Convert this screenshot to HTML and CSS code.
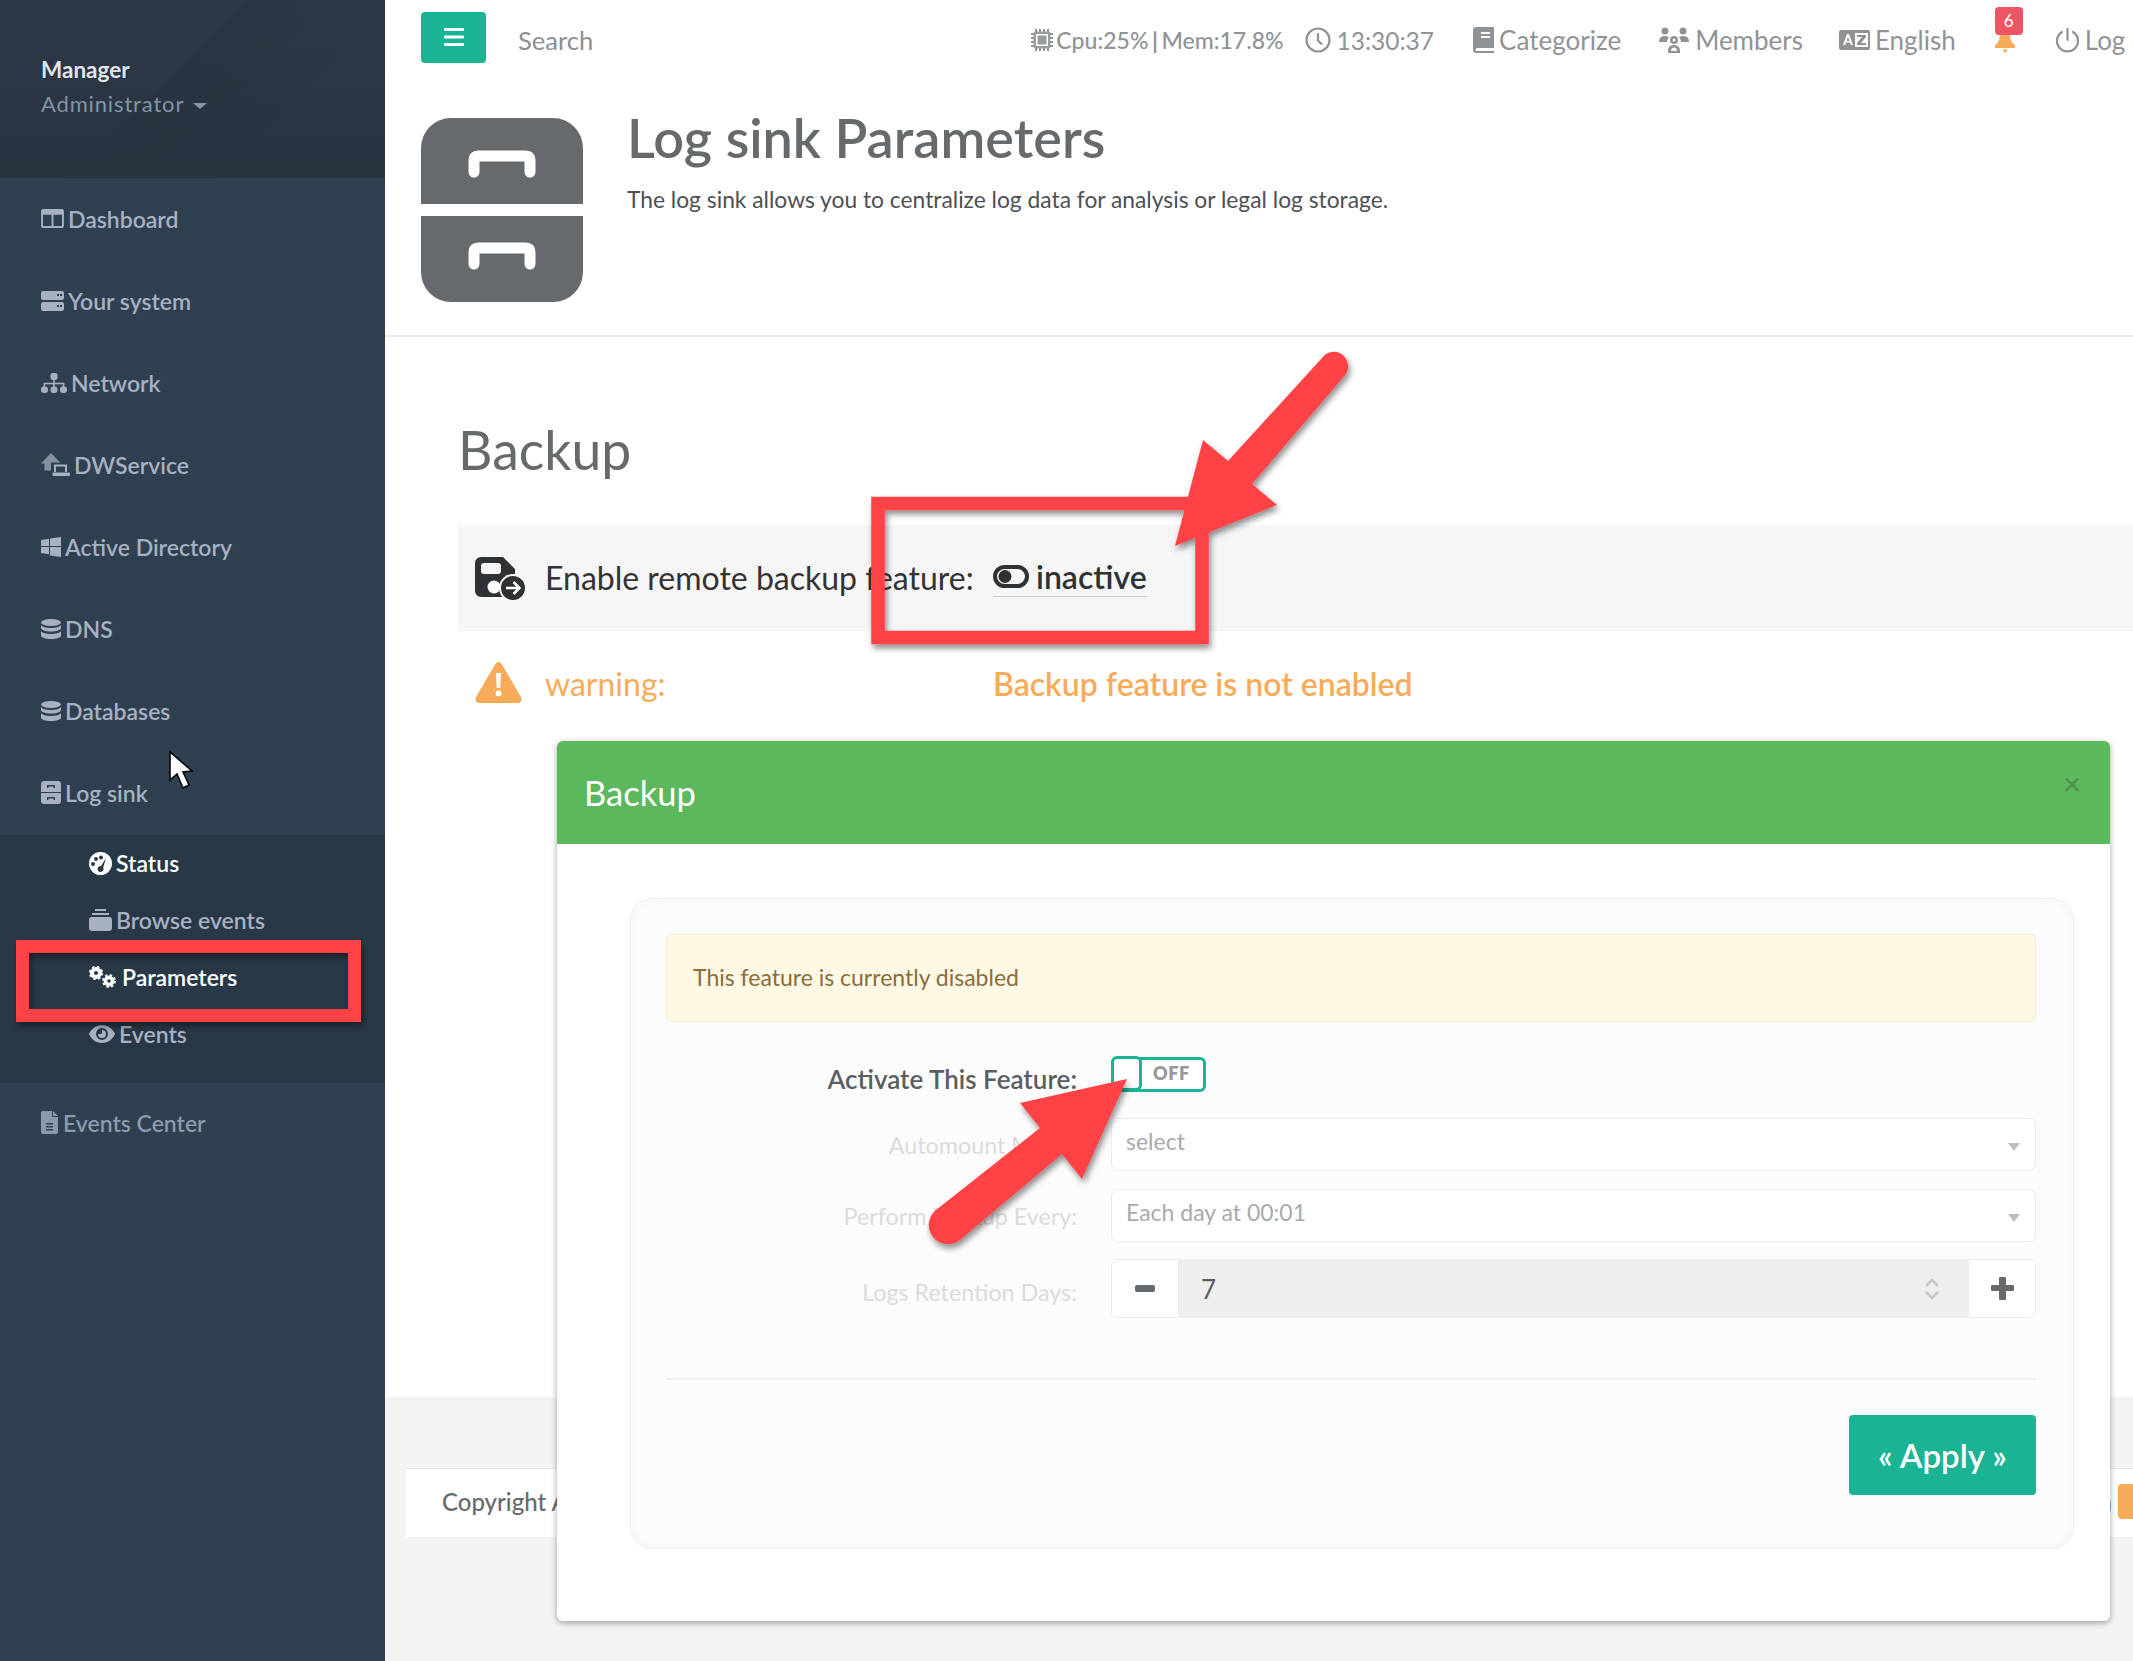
FILE: index.html
```html
<!DOCTYPE html>
<html lang="en">
<head>
<meta charset="utf-8">
<title>Log sink Parameters</title>
<link rel="stylesheet" href="styles.css">
</head>
<body>
<div class="app">
  <aside class="sidebar">
    <div class="profile">
      <div class="profile-name">Manager</div>
      <div class="profile-role">Administrator <span class="caret"></span></div>
    </div>
    <nav class="nav">
      <a class="nav-item"><svg class="ni" width="23" height="19" viewBox="0 0 24 20"><path fill="currentColor" fill-rule="evenodd" d="M2 0h20a2 2 0 0 1 2 2v16a2 2 0 0 1-2 2H2a2 2 0 0 1-2-2V2a2 2 0 0 1 2-2zm0 6v12h9V6zm11 0v12h9V6z"/></svg>Dashboard</a>
      <a class="nav-item"><svg class="ni" width="23" height="20" viewBox="0 0 23 20"><path fill="currentColor" fill-rule="evenodd" d="M2 0h19a2 2 0 0 1 2 2v5a2 2 0 0 1-2 2H2a2 2 0 0 1-2-2V2a2 2 0 0 1 2-2zm14 3v2h2V3zm3 0v2h2V3zM2 11h19a2 2 0 0 1 2 2v5a2 2 0 0 1-2 2H2a2 2 0 0 1-2-2v-5a2 2 0 0 1 2-2zm14 3v2h2v-2zm3 0v2h2v-2z"/></svg>Your system</a>
      <a class="nav-item"><svg class="ni" width="26" height="20" viewBox="0 0 26 20"><g fill="currentColor"><rect x="9.500" width="7" height="7" rx="2"/><rect x="12.200" y="6" width="1.600" height="9"/><rect x="3" y="9.700" width="20" height="1.600"/><rect x="2.600" y="10" width="1.600" height="5"/><rect x="21.800" y="10" width="1.600" height="5"/><rect y="13.500" width="7" height="6.500" rx="3"/><rect x="9.500" y="13.500" width="7" height="6.500" rx="3"/><rect x="19" y="13.500" width="7" height="6.500" rx="3"/></g></svg>Network</a>
      <a class="nav-item"><svg class="ni" width="29" height="23" viewBox="0 0 29 23"><path fill="currentColor" opacity=".72" d="M0 10.500 10 0l9 9.500v8H3.500v-7z"/><rect x="10" y="9.500" width="19" height="13.500" fill="#2f4050"/><path fill="none" stroke="currentColor" stroke-width="2" d="M14 19V12.500h11V19"/><rect x="11.500" y="19.500" width="17.500" height="3.500" rx="1" fill="currentColor"/></svg>DWService</a>
      <a class="nav-item"><svg class="ni" width="20" height="20" viewBox="0 0 20 20"><path fill="currentColor" d="M0 3l8-1.200V9H0zM9 1.600 20 0v9H9zM0 10h8v7.200L0 16zM9 10h11v10L9 18.400z"/></svg>Active Directory</a>
      <a class="nav-item"><svg class="ni" width="20" height="22" viewBox="0 0 20 20"><ellipse cx="10" cy="3.500" rx="10" ry="3.500" fill="currentColor"/><path fill="currentColor" d="M0 6c1 2 5 3 10 3s9-1 10-3v3c0 2-4.500 3.500-10 3.500S0 11 0 9zM0 12c1 2 5 3 10 3s9-1 10-3v4.500C20 18.500 15.500 20 10 20S0 18.500 0 16.500z"/></svg>DNS</a>
      <a class="nav-item"><svg class="ni" width="20" height="22" viewBox="0 0 20 20"><ellipse cx="10" cy="3.500" rx="10" ry="3.500" fill="currentColor"/><path fill="currentColor" d="M0 6c1 2 5 3 10 3s9-1 10-3v3c0 2-4.500 3.500-10 3.500S0 11 0 9zM0 12c1 2 5 3 10 3s9-1 10-3v4.500C20 18.500 15.500 20 10 20S0 18.500 0 16.500z"/></svg>Databases</a>
      <a class="nav-item"><svg class="ni" width="20" height="23" viewBox="0 0 20 23"><path fill="currentColor" fill-rule="evenodd" d="M3 0h14a3 3 0 0 1 3 3v8H0V3a3 3 0 0 1 3-3zm3 4v3h1.500V5.500h5V7H14V4zM0 12h20v8a3 3 0 0 1-3 3H3a3 3 0 0 1-3-3zm6 4v3h1.500v-1.500h5V19H14v-3z"/></svg>Log sink</a>
      <div class="subnav">
        <a class="sub-item is-on"><svg class="ni" width="23" height="23" viewBox="0 0 23 23"><path fill="currentColor" fill-rule="evenodd" d="M11.500 0a11.500 11.500 0 1 1 0 23 11.500 11.500 0 0 1 0-23zM4 10a2 2 0 1 0 0 4 2 2 0 0 0 0-4zm3-5a2 2 0 1 0 0 4 2 2 0 0 0 0-4zm5-1.500a2 2 0 1 0 0 4 2 2 0 0 0 0-4zM17 6l-5 8a3 3 0 1 0 2.200 1.500z"/></svg>Status</a>
        <a class="sub-item"><svg class="ni" width="23" height="22" viewBox="0 0 23 22"><path fill="currentColor" d="M6 0h11v2H6zM3 4h17v2H3zM3 8h17a3 3 0 0 1 3 3v8a3 3 0 0 1-3 3H3a3 3 0 0 1-3-3v-8a3 3 0 0 1 3-3z"/></svg>Browse events</a>
        <a class="sub-item is-on"><svg class="ni sub-gears" width="28" height="22" viewBox="0 0 28 22"><g fill="none" stroke="currentColor"><circle cx="7" cy="7" r="4" stroke-width="4"/><circle cx="7" cy="7" r="6.200" stroke-width="1.800" stroke-dasharray="2.500 2.400"/><circle cx="20" cy="15" r="3.600" stroke-width="3.600"/><circle cx="20" cy="15" r="6" stroke-width="1.800" stroke-dasharray="2.500 2.200"/></g></svg>Parameters</a>
        <a class="sub-item"><svg class="ni" width="26" height="18" viewBox="0 0 26 18"><path fill="currentColor" fill-rule="evenodd" d="M13 0c6 0 11 4 13 9-2 5-7 9-13 9S2 14 0 9c2-5 7-9 13-9zm0 3a6 6 0 1 0 0 12 6 6 0 0 0 0-12zm0 2a4 4 0 1 1-4 4h3a1 1 0 0 0 1-1z"/></svg>Events</a>
      </div>
      <a class="nav-item nav-dim"><svg class="ni nav-doc" width="17" height="23" viewBox="0 0 17 23"><path fill="currentColor" fill-rule="evenodd" d="M2 0h9v6h6v15a2 2 0 0 1-2 2H2a2 2 0 0 1-2-2V2a2 2 0 0 1 2-2zm10 0 5 5h-5zM5 12v1.500h7V12zm0 3v1.500h7V15zm0 3v1.500h7V18z"/></svg>Events Center</a>
    </nav>
  </aside>

  <main class="main">
    <header class="topbar">
      <button class="menu-btn"><svg width="20" height="18" viewBox="0 0 20 18"><path fill="#fff" d="M1 0h18a1 1 0 0 1 1 1v1a1 1 0 0 1-1 1H1a1 1 0 0 1-1-1V1a1 1 0 0 1 1-1zm0 7.500h18a1 1 0 0 1 1 1v1a1 1 0 0 1-1 1H1a1 1 0 0 1-1-1v-1a1 1 0 0 1 1-1zM1 15h18a1 1 0 0 1 1 1v1a1 1 0 0 1-1 1H1a1 1 0 0 1-1-1v-1a1 1 0 0 1 1-1z"/></svg></button>
      <span class="search">Search</span>
      <div class="top-links">
        <span class="tl tl-cpu"><svg width="24" height="24" viewBox="0 0 24 24"><path fill="none" stroke="currentColor" stroke-width="2" d="M6 1v22M10 1v22M14 1v22M18 1v22M1 6h22M1 10h22M1 14h22M1 18h22"/><rect x="3.500" y="3.500" width="17" height="17" rx="2" fill="#9a9da0"/><rect x="6" y="6" width="12" height="12" fill="#fff"/><rect x="7.500" y="7.500" width="9" height="9" fill="#9a9da0"/></svg>Cpu:25%<i class="sep">|</i>Mem:17.8%</span>
        <span class="tl tl-clock"><svg width="26" height="26" viewBox="0 0 26 26"><circle cx="13" cy="13" r="11.500" fill="none" stroke="currentColor" stroke-width="2.200"/><path fill="none" stroke="currentColor" stroke-width="2.200" d="M13 6v7.500l4 4"/></svg>13:30:37</span>
        <span class="tl tl-cat"><svg width="21" height="26" viewBox="0 0 21 26"><path fill="currentColor" fill-rule="evenodd" d="M3 0h18v21H4a1.500 1.500 0 0 0 0 3h17v2H3a3 3 0 0 1-3-3V3a3 3 0 0 1 3-3zm5 5v2h9V5zm0 4v2h9V9z"/></svg>Categorize</span>
        <span class="tl tl-mem"><svg width="30" height="26" viewBox="0 0 30 26"><g fill="currentColor"><circle cx="6" cy="4" r="3.500"/><circle cx="24" cy="4" r="3.500"/><path d="M0 15c0-4 2-6 6-6 2 0 3 .5 4 1.500A7 7 0 0 0 8 15zM30 15c0-4-2-6-6-6-2 0-3 .5-4 1.500a7 7 0 0 1 2 4.500z"/><path fill-rule="evenodd" d="M15 9a4 4 0 1 1 0 8 4 4 0 0 1 0-8zm0 2.500a1.500 1.500 0 1 0 0 3 1.500 1.500 0 0 0 0-3z"/><path fill-rule="evenodd" d="M9 26v-2c0-4 2.500-6 6-6s6 2 6 6v2zm3-2h6c0-2-1-3.500-3-3.500s-3 1.500-3 3.500z"/></g></svg>Members</span>
        <span class="tl tl-lang"><svg width="31" height="20" viewBox="0 0 31 20"><path fill="currentColor" fill-rule="evenodd" d="M2 0h27a2 2 0 0 1 2 2v16a2 2 0 0 1-2 2H2a2 2 0 0 1-2-2V2a2 2 0 0 1 2-2zm14 3v14h13V3zM8 4 4 15h2.200l.8-2.500h4l.8 2.500H14L10 4zm1 2.800L10.300 11H7.700zM18 5h9v2l-5 6h5v2h-9v-2l5-6h-5z"/></svg>English</span>
        <span class="tl tl-bell"><span class="badge">6</span><svg width="22" height="22" viewBox="0 0 22 22"><path fill="#f8ac59" d="M6 0h10c0 6 1.500 10 5 12v3H1v-3c3.500-2 5-6 5-12zM8 16.500h6L11 20z"/></svg></span>
        <span class="tl tl-log"><svg width="25" height="26" viewBox="0 0 25 26"><path fill="none" stroke="currentColor" stroke-width="2.200" stroke-linecap="round" d="M12.500 2v11M7 5A10.500 10.500 0 1 0 18 5"/></svg>Log out</span>
      </div>
    </header>

    <section class="page-head">
      <svg class="page-icon" width="162" height="184" viewBox="0 0 162 184"><path fill="#676a6d" d="M30 0h102a30 30 0 0 1 30 30v56H0V30A30 30 0 0 1 30 0zM0 98h162v56a30 30 0 0 1-30 30H30a30 30 0 0 1-30-30z"/><path fill="none" stroke="#fff" stroke-width="11" stroke-linecap="round" stroke-linejoin="round" d="M53 54V42q0-4 4-4h48q4 0 4 4v12M53 146v-12q0-4 4-4h48q4 0 4 4v12"/></svg>
      <div class="page-text">
        <h1 class="page-title">Log sink Parameters</h1>
        <p class="page-desc">The log sink allows you to centralize log data for analysis or legal log storage.</p>
      </div>
    </section>

    <section class="content">
      <h2 class="section-title">Backup</h2>
      <div class="feature-row">
        <svg class="row-icon" width="53" height="44" viewBox="0 0 53 44"><path fill="#2f3234" fill-rule="evenodd" d="M6 0h22l12 12v24a4 4 0 0 1-4 4H6a6 6 0 0 1-6-6V6a6 6 0 0 1 6-6zm3 6a3 3 0 0 0-3 3v5a3 3 0 0 0 3 3h14a3 3 0 0 0 3-3V9a3 3 0 0 0-3-3z"/><circle cx="19" cy="30" r="6.500" fill="#fff"/><circle cx="38" cy="31" r="14" fill="#f6f6f6"/><circle cx="38" cy="31" r="12" fill="#2f3234"/><path fill="none" stroke="#fff" stroke-width="2.500" d="M31 31h13M38.500 25l6 6-6 6"/></svg>
        <span class="feature-label">Enable remote backup feature:</span>
        <span class="state"><svg width="36" height="25" viewBox="0 0 36 25"><rect x="2" y="3" width="32" height="19" rx="9.500" fill="none" stroke="#2f3234" stroke-width="4"/><circle cx="12" cy="12.500" r="6.500" fill="#2f3234"/></svg><b>inactive</b></span>
      </div>
      <div class="warning-row">
        <svg class="warn-icon" width="47" height="41" viewBox="0 0 47 41"><path fill="#f8ac59" d="M23.500 0c1.500 0 2.500.8 3.400 2.400L46 35c1.500 3-.2 6-3.500 6h-38C1.200 41-.5 38 1 35L20.100 2.400C21 .8 22 0 23.500 0z"/><path fill="#fff" d="M21 11h5l-.7 15h-3.600zM23.500 28.500a3 3 0 1 1 0 6 3 3 0 0 1 0-6z"/></svg>
        <span class="warn-label">warning:</span>
        <span class="warn-msg">Backup feature is not enabled</span>
      </div>
    </section>

    <div class="footer-gap"></div>
    <footer class="footer">
      <span class="copy">Copyright Andrea Mauro</span>
      <span class="foot-right">Version <span class="foot-badge"></span></span>
    </footer>
  </main>
</div>

<section class="modal">
  <div class="modal-head">
    <span class="modal-title">Backup</span>
    <span class="modal-x">×</span>
  </div>
  <div class="modal-body">
    <div class="panel">
      <div class="alert">This feature is currently disabled</div>
      <div class="form">
        <div class="frow frow-toggle">
          <label class="flabel flabel-on">Activate This Feature:</label>
          <div class="toggle"><span class="knob"></span><span class="off">OFF</span></div>
        </div>
        <div class="frow frow-a">
          <label class="flabel">Automount Mode:</label>
          <div class="select"><span class="sel-text">select</span><span class="sel-arrow"></span></div>
        </div>
        <div class="frow frow-b">
          <label class="flabel">Perform Backup Every:</label>
          <div class="select"><span class="sel-text">Each day at 00:01</span><span class="sel-arrow"></span></div>
        </div>
        <div class="frow frow-b">
          <label class="flabel flabel-low">Logs Retention Days:</label>
          <div class="spin">
            <span class="spin-btn spin-l"><svg width="20" height="7" viewBox="0 0 20 7"><rect width="20" height="7" rx="2" fill="#676a6d"/></svg></span>
            <span class="spin-val">7<svg class="spin-arrows" width="14" height="24" viewBox="0 0 14 24"><path fill="none" stroke="#c6c6cc" stroke-width="2.500" d="M1 9l6-6 6 6M1 15l6 6 6-6"/></svg></span>
            <span class="spin-btn spin-r"><svg width="23" height="23" viewBox="0 0 23 23"><path fill="#676a6d" d="M8 1a1 1 0 0 1 1-1h5a1 1 0 0 1 1 1v7h7a1 1 0 0 1 1 1v4a1 1 0 0 1-1 1h-7v8a1 1 0 0 1-1 1H9a1 1 0 0 1-1-1v-8H1a1 1 0 0 1-1-1V9a1 1 0 0 1 1-1h7z"/></svg></span>
          </div>
        </div>
      </div>
      <hr class="rule">
      <div class="actions"><button class="apply">« Apply »</button></div>
    </div>
  </div>
</section>

<svg class="marks" width="2133" height="1661" viewBox="0 0 2133 1661">
  <defs>
    <filter id="sh" x="-10%" y="-10%" width="125%" height="125%"><feDropShadow dx="2" dy="4" stdDeviation="3" flood-color="#000" flood-opacity=".45"/></filter>
  </defs>
  <g filter="url(#sh)">
    <rect x="22.500" y="946.500" width="332" height="69" fill="none" stroke="#ff4245" stroke-width="13"/>
    <rect x="878" y="503.500" width="324" height="134" fill="none" stroke="#ff4245" stroke-width="13.500"/>
    <path fill="#ff4245" d="M1175 546 1203 440 1228 461 1322 358a14 14 0 0 1 24 1 15 15 0 0 1 0 15L1252 484 1277 505z"/>
    <path fill="#ff4245" d="M1127 1079 1020 1103 1040 1128 936 1210a17 17 0 0 0 24 30L1062 1154 1082 1179z"/>
  </g>
  <path fill="#fff" stroke="#000" stroke-width="1.500" d="M170 752v28l7-6 6 14 6-3-6-13 9-1z"/>
</svg>
</body>
</html>
```
FILE: styles.css
```css
* { box-sizing: border-box; }
html, body { margin: 0; padding: 0; }
body {
  width: 2133px;
  height: 1661px;
  overflow: hidden;
  position: relative;
  font-family: "Lato", "Liberation Sans", sans-serif;
  color: #676a6c;
  background: #f3f3f4;
}
.app { display: flex; height: 1661px; }

/* sidebar */
.sidebar { width: 385px; flex: none; background: #2f4050; }
.profile {
  height: 178px;
  padding: 57px 0 0 41px;
  background:
    linear-gradient(135deg, rgba(255,255,255,0) 44%, rgba(0,0,0,.035) 44%, rgba(0,0,0,.01) 70%, rgba(255,255,255,0) 70%),
    linear-gradient(180deg, #2d3745, #2a3441);
}
.profile-name { color: #dfe4ed; font-size: 22.500px; font-weight: 700; line-height: 26px; }
.profile-role { color: #8095a8; font-size: 22px; line-height: 26px; margin-top: 8px; letter-spacing: .85px; }
.caret {
  display: inline-block;
  width: 0; height: 0;
  margin-left: 3px;
  vertical-align: 3px;
  border-left: 7px solid transparent;
  border-right: 7px solid transparent;
  border-top: 6px solid #8095a8;
}
.nav-item {
  display: flex;
  align-items: center;
  height: 82px;
  padding: 0 0 1px 41px;
  color: #a7b1c2;
  font-size: 23px;
  font-weight: 600;
}
.nav-dim { color: #8d99ac; }
.ni { flex: none; margin-right: 4px; }
.nav-doc { margin-right: 5px; }
.subnav { background: #293846; height: 248px; margin-top: 1px; margin-bottom: -1px; padding-bottom: 20px; }
.sub-item {
  display: flex;
  align-items: center;
  height: 57px;
  padding: 0 0 1px 89px;
  color: #a7b1c2;
  font-size: 23px;
  font-weight: 600;
}
.sub-item.is-on { color: #fff; }
.sub-gears { margin-right: 5px; }

/* main */
.main { flex: 1; min-width: 0; display: flex; flex-direction: column; height: 1661px; }
.topbar {
  display: flex;
  align-items: center;
  height: 80px;
  padding-left: 36px;
  background: #fff;
  white-space: nowrap;
  overflow: hidden;
}
.menu-btn {
  flex: none;
  width: 65px;
  height: 51px;
  margin-top: -6px;
  border: 0;
  border-radius: 4px;
  background: #1ab394;
  display: flex;
  align-items: center;
  justify-content: center;
  padding: 0;
}
.search { flex: none; margin-left: 32px; font-size: 25.600px; color: #8b8e91; }
.top-links { position: relative; flex: 1; display: flex; align-items: center; height: 80px; color: #8f9396; font-size: 26px; }
.tl { flex: none; display: inline-flex; align-items: center; gap: 2px; color: #8f9396; }
.sep { font-style: normal; margin: 0 1.500px; font-weight: 700; }
.tl-cpu { margin-left: 437px; font-size: 23px; font-weight: 500; }
.tl-clock { margin-left: 21px; gap: 6px; font-size: 24.500px; }
.tl-cat { margin-left: 39px; gap: 5px; }
.tl-mem { margin-left: 38px; gap: 6px; }
.tl-lang { margin-left: 36px; gap: 5px; }
.tl-bell { margin-left: 38px; position: relative; width: 22px; height: 22px; margin-top: 8px; }
.badge {
  position: absolute;
  top: -26px;
  left: 1px;
  width: 28px;
  height: 28px;
  border-radius: 4px;
  background: #ed5565;
  color: #fff;
  font-size: 17px;
  line-height: 28px;
  text-align: center;
}
.tl-log { margin-left: 39px; gap: 5px; }

.page-head {
  display: flex;
  height: 257px;
  padding: 38px 0 0 36px;
  background: #fff;
  border-bottom: 2px solid #e7eaec;
}
.page-icon { flex: none; }
.page-text { margin-left: 44px; }
.page-title { margin: -12px 0 0; font-size: 54px; line-height: 64px; font-weight: 600; color: #676a6c; }
.page-desc { margin: 15px 0 0; font-size: 22.800px; line-height: 28px; color: #4d5053; }

.content { flex: none; height: 1060px; padding: 0 0 0 73px; background: #fff; }
.section-title { margin: 0; padding-top: 78px; height: 188px; font-size: 53.500px; line-height: 68px; font-weight: 400; color: #676a6c; }
.feature-row { display: flex; align-items: center; height: 106px; background: #f6f6f6; padding-left: 17px; font-size: 32px; color: #333; }
.row-icon { flex: none; margin-top: 2px; }
.feature-label { margin-left: 17px; width: 448px; margin-top: -2px; }
.state { display: inline-flex; align-items: center; gap: 7px; border-bottom: 1px solid #ccc; line-height: 38px; margin-top: -2px; }
.state b { font-weight: 600; color: #2f3234; }
.warning-row { display: flex; align-items: center; height: 106px; padding: 0 0 2px 17px; font-size: 32px; color: #f8ac59; }
.warn-icon { flex: none; margin-top: -2px; }
.warn-label { margin-left: 23px; width: 448px; }
.warn-msg { font-weight: 600; }

.footer-gap { height: 71px; flex: none; }
.footer {
  margin-left: 21px;
  height: 69px;
  flex: none;
  background: #fff;
  border-top: 1px solid #e7eaec;
  display: flex;
  align-items: center;
  justify-content: space-between;
  padding: 0 0 3px 36px;
  font-size: 24px;
  font-weight: 500;
  color: #676a6c;
}
.foot-right { display: flex; align-items: center; gap: 6px; }
.foot-badge { display: block; width: 40px; height: 35px; margin-right: -25px; background: #f8ac59; border-radius: 4px; }

/* modal */
.modal {
  position: absolute;
  left: 557px;
  top: 741px;
  width: 1553px;
  height: 880px;
  background: #fff;
  border-radius: 6px;
  box-shadow: 0 2px 6px rgba(0,0,0,.35);
  overflow: hidden;
}
.modal-head {
  height: 103px;
  background: #5cb85c;
  padding: 0 26px;
  display: flex;
  align-items: center;
  justify-content: space-between;
  color: #fff;
}
.modal-title { font-size: 34.500px; font-weight: 400; padding-left: 1px; }
.modal-x { font-size: 31px; color: #4a8f4a; margin-top: -20px; margin-right: 3px; }
.modal-body { padding: 54px 36px 72px 73px; }
.panel {
  height: 651px;
  padding: 35px 37px 0 35px;
  background: #fcfcfc;
  border: 1px solid #eeeeee;
  border-radius: 22px;
  box-shadow: inset 0 0 12px rgba(0,0,0,.04);
}
.alert {
  height: 88px;
  padding: 0 26px 2px;
  display: flex;
  align-items: center;
  font-size: 23px;
  color: #8a6d3b;
  background: #fef8e4;
  border: 1px solid #f9eecb;
  border-radius: 5px;
}
.form { margin-top: 35px; }
.frow { display: grid; grid-template-columns: 411px 1fr; column-gap: 34px; align-items: center; }
.frow-toggle { height: 35px; grid-template-rows: 35px; }
.frow-a { margin-top: 26px; }
.frow-b { margin-top: 18px; }
.flabel { text-align: right; font-size: 23.300px; color: #dadbdc; }
.flabel-on { color: #5b5e61; font-size: 26px; font-weight: 600; margin-top: 8px; }
.flabel-low { padding-top: 6px; }
.toggle {
  position: relative;
  width: 95px;
  height: 35px;
  border: 3px solid #1ab394;
  border-radius: 6px;
  background: #fff;
  display: flex;
  align-items: center;
}
.knob { display: block; width: 31px; height: 35px; margin: -3px 0 0 -3px; border: 3px solid #1ab394; border-radius: 6px; background: #fff; flex: none; }
.off { margin: -3px 0 0 11px; font-size: 18px; font-weight: 800; color: #97999b; letter-spacing: .6px; }
.select {
  position: relative;
  height: 53px;
  padding: 0 14px 8px;
  display: flex;
  align-items: center;
  font-size: 23px;
  color: #a8aaac;
  background: #fff;
  border: 1px solid #ececec;
  border-radius: 7px;
}
.sel-arrow {
  position: absolute;
  right: 15px;
  top: 24px;
  width: 0; height: 0;
  border-left: 6px solid transparent;
  border-right: 6px solid transparent;
  border-top: 8px solid #bdbdbd;
}
.spin {
  display: flex;
  height: 59px;
  margin-top: -1px;
  font-size: 26px;
  border-radius: 7px;
}
.spin-btn { flex: none; display: flex; align-items: center; justify-content: center; background: #fff; border: 1px solid #ececec; width: 68px; }
.spin-l { border-radius: 7px 0 0 7px; }
.spin-r { border-radius: 0 7px 7px 0; }
.spin-val { flex: 1; display: flex; align-items: center; justify-content: space-between; padding: 0 21px 0 22px; background: #eeeeee; color: #5d6063; }
.spin-arrows { margin-right: 8px; }
.rule { margin: 60px 0 0; border: 0; border-top: 2px solid #eeeeee; }
.actions { display: flex; justify-content: flex-end; margin-top: 35px; }
.apply {
  width: 187px;
  height: 80px;
  border: 0;
  border-radius: 4px;
  background: #1ab394;
  color: #fff;
  font-family: "Lato", "Liberation Sans", sans-serif;
  font-size: 33px;
  font-weight: 600;
  padding: 0;
}

/* annotations */
.marks { position: absolute; left: 0; top: 0; pointer-events: none; }
```
